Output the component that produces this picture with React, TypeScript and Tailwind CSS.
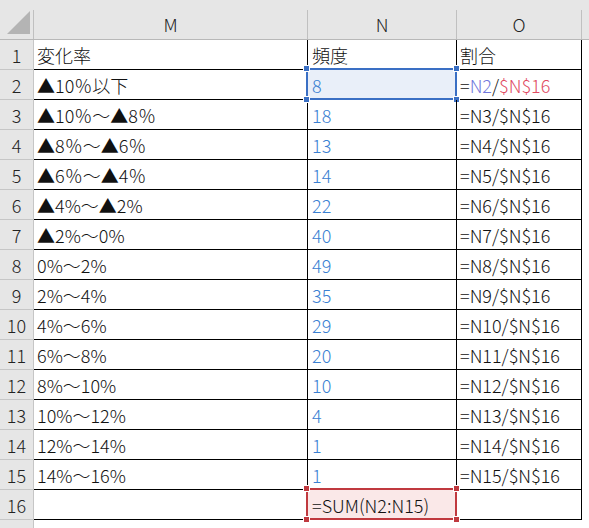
import React from "react";

type Row = { m: string; n: string; o: React.ReactNode };

const data: [string, string][] = [
  ["▲10％以下", "8"],
  ["▲10％～▲8％", "18"],
  ["▲8％～▲6％", "13"],
  ["▲6％～▲4％", "14"],
  ["▲4%～▲2%", "22"],
  ["▲2%～0%", "40"],
  ["0%～2%", "49"],
  ["2%～4%", "35"],
  ["4%～6%", "29"],
  ["6%～8%", "20"],
  ["8%～10%", "10"],
  ["10%～12%", "4"],
  ["12%～14%", "1"],
  ["14%～16%", "1"],
];

function Handle({ pos, color }: { pos: string; color: string }) {
  return (
    <div
      className={`absolute w-[7px] h-[7px] border border-white ${pos}`}
      style={{ backgroundColor: color }}
    />
  );
}

function SelBox({ color }: { color: string }) {
  return (
    <div
      className="absolute -left-[2px] -top-[2px] -right-[1px] -bottom-[1px] border-2 pointer-events-none"
      style={{ borderColor: color }}
    >
      <Handle pos="-left-[5px] -top-[5px]" color={color} />
      <Handle pos="-right-[5px] -top-[5px]" color={color} />
      <Handle pos="-left-[5px] -bottom-[5px]" color={color} />
      <Handle pos="-right-[5px] -bottom-[5px]" color={color} />
    </div>
  );
}

export default function App() {
  const rows: Row[] = [
    { m: "変化率", n: "頻度", o: "割合" },
    ...data.map(([m, n], i) => ({
      m,
      n,
      o: `=N${i + 2}/$N$16`,
    })),
    { m: "", n: "=SUM(N2:N15)", o: "" },
  ];

  return (
    <div
      className="w-[589px] h-[528px] bg-white overflow-hidden text-[18px] leading-none font-light text-[#111] flex flex-col"
      style={{ fontFamily: "'Noto Sans CJK JP', 'Noto Sans', sans-serif" }}
    >
      {/* column headers */}
      <div className="flex h-[40px] shrink-0 bg-[#e6e6e6] border-b border-[#b8b8b8]">
        <div className="w-[34px] flex">
          <div className="flex-1 flex items-end justify-end pb-[4px] pr-[2px]">
            <svg width="24" height="24" viewBox="0 0 24 24">
              <polygon points="0,23 23,23 23,0" fill="#b4b4b4" />
            </svg>
          </div>
          <div className="w-px self-end h-[29px] bg-[#c0c0c0]" />
        </div>
        {[
          ["M", "w-[274px]"],
          ["N", "w-[149px]"],
          ["O", "w-[125px]"],
        ].map(([l, w]) => (
          <div key={l} className={`${w} flex`}>
            <div className="flex-1 flex items-center justify-center pt-[9px] text-[#222]">
              {l}
            </div>
            <div className="w-px self-end h-[29px] bg-[#c0c0c0]" />
          </div>
        ))}
        <div className="flex-1" />
      </div>

      {rows.map((r, i) => {
        const rn = i + 1;
        const isN2 = rn === 2;
        const isN16 = rn === 16;
        return (
          <div key={rn} className="flex h-[30px] shrink-0">
            <div className="w-[34px] bg-[#e6e6e6] border-r border-b border-[#c6c6c6] flex items-center justify-center text-[#222]">
              {rn}
            </div>
            <div className="w-[274px] border-r border-b border-black flex items-center pl-[3px]">
              {r.m}
            </div>
            <div
              className={`relative w-[149px] border-r border-b border-black flex items-center pl-[4px] ${
                isN2 ? "bg-[#e9eff9]" : isN16 ? "bg-[#fae8e8]" : ""
              } ${rn >= 2 && rn <= 15 ? "text-[#3a80d2]" : ""}`}
            >
              {r.n}
              {isN2 && <SelBox color="#3a6fc4" />}
              {isN16 && <SelBox color="#c0393f" />}
            </div>
            <div className="w-[125px] border-r border-b border-black flex items-center pl-[3px] whitespace-nowrap">
              {isN2 ? (
                <>
                  =<span className="text-[#7077dc]">N2</span>/
                  <span className="text-[#e04a62]">$N$16</span>
                </>
              ) : (
                r.o
              )}
            </div>
            <div className="flex-1" />
          </div>
        );
      })}
      <div className="flex flex-1">
        <div className="w-[34px] bg-[#e6e6e6] border-r border-[#c6c6c6]" />
        <div className="flex-1" />
      </div>
    </div>
  );
}
